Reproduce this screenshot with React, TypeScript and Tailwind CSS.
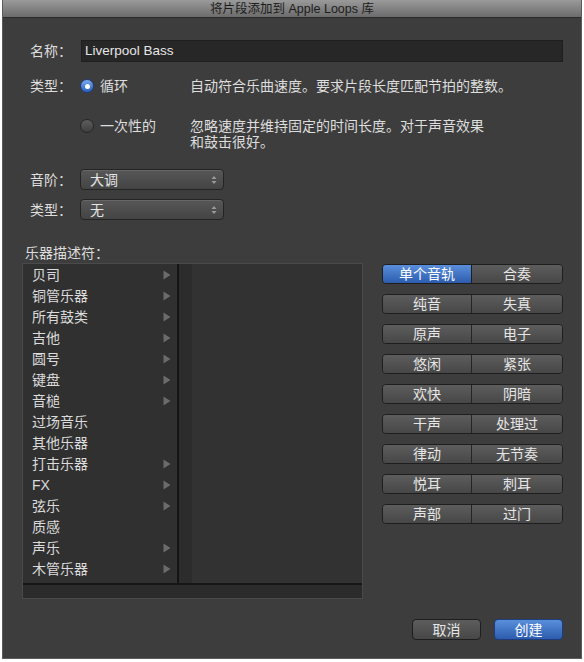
import React from 'react';

const instruments = [
  { name: '贝司', more: true },
  { name: '铜管乐器', more: true },
  { name: '所有鼓类', more: true },
  { name: '吉他', more: true },
  { name: '圆号', more: true },
  { name: '键盘', more: true },
  { name: '音槌', more: true },
  { name: '过场音乐', more: false },
  { name: '其他乐器', more: false },
  { name: '打击乐器', more: true },
  { name: 'FX', more: true },
  { name: '弦乐', more: true },
  { name: '质感', more: false },
  { name: '声乐', more: true },
  { name: '木管乐器', more: true },
];

const descriptors = [
  ['单个音轨', '合奏'],
  ['纯音', '失真'],
  ['原声', '电子'],
  ['悠闲', '紧张'],
  ['欢快', '阴暗'],
  ['干声', '处理过'],
  ['律动', '无节奏'],
  ['悦耳', '刺耳'],
  ['声部', '过门'],
];

const Radio: React.FC<{ on?: boolean }> = ({ on }) =>
  on ? (
    <span className="w-[14px] h-[14px] rounded-full border border-[#1d3d7c] bg-gradient-to-b from-[#7aa9ef] to-[#2b5fbf] flex items-center justify-center shrink-0">
      <span className="w-[5px] h-[5px] rounded-full bg-white" />
    </span>
  ) : (
    <span className="w-[14px] h-[14px] rounded-full border border-[#262626] bg-gradient-to-b from-[#5e5e5e] to-[#3f3f3f] shrink-0" />
  );

const Select: React.FC<{ value: string }> = ({ value }) => (
  <div className="w-[144px] h-[21px] rounded-[4px] border border-[#242424] bg-gradient-to-b from-[#575757] to-[#444444] flex items-center pl-[9px] pr-[6px] text-[#e4e4e4] shadow-[inset_0_1px_0_#666]">
    <span className="flex-1 leading-[16px]">{value}</span>
    <svg width="6" height="10" viewBox="0 0 6 10">
      <path d="M3 1 L5.5 4 L0.5 4 Z" fill="#9a9a9a" />
      <path d="M3 9 L5.5 6 L0.5 6 Z" fill="#9a9a9a" />
    </svg>
  </div>
);

const Arrow = () => (
  <svg width="8" height="10" viewBox="0 0 8 10">
    <path d="M0.5 0.5 L7.5 5 L0.5 9.5 Z" fill="#6b6b6b" />
  </svg>
);

export default function App() {
  return (
    <div className="w-[584px] h-[662px] bg-white font-['Liberation_Sans','Noto_Sans_CJK_SC',sans-serif] text-[14px]">
      <div className="ml-[2px] w-[580px] h-[659px] bg-[#3d3d3d] border-x border-b border-[#5c5c5c] flex flex-col">
        {/* title bar */}
        <div className="h-[18px] shrink-0 bg-gradient-to-b from-[#9a9a9a] to-[#6c6c6c] border-b border-[#2a2a2a] flex items-center justify-center text-[12.5px] leading-[14px] text-[#1c1c1c]">
          将片段添加到 Apple Loops 库
        </div>

        <div className="flex flex-col pl-[19px] pr-[18px] text-[#dedede]">
          {/* name */}
          <div className="mt-[22px] flex items-center pl-[8px]">
            <span className="w-[51px] leading-[16px]">名称：</span>
            <div className="flex-1 h-[22px] bg-[#272727] border border-[#1f1f1f] flex items-center pl-[3px] text-[#e6e6e6] text-[13.5px] leading-[16px]">
              Liverpool Bass
            </div>
          </div>

          {/* loop type */}
          <div className="mt-[16px] flex items-center pl-[8px] h-[16px]">
            <span className="w-[50px] leading-[16px]">类型：</span>
            <div className="w-[110px] flex items-center gap-[6px]">
              <Radio on />
              <span className="leading-[16px]">循环</span>
            </div>
            <span className="leading-[16px]">自动符合乐曲速度。要求片段长度匹配节拍的整数。</span>
          </div>

          <div className="mt-[24px] flex items-start pl-[58px]">
            <div className="w-[110px] h-[16px] flex items-center gap-[6px]">
              <Radio />
              <span className="leading-[16px]">一次性的</span>
            </div>
            <span className="leading-[16px] w-[310px]">
              忽略速度并维持固定的时间长度。对于声音效果
              <br />
              和鼓击很好。
            </span>
          </div>

          {/* scale / genre */}
          <div className="mt-[19px] flex items-center pl-[8px]">
            <span className="w-[50px] leading-[16px]">音阶：</span>
            <Select value="大调" />
          </div>
          <div className="mt-[9px] flex items-center pl-[8px]">
            <span className="w-[50px] leading-[16px]">类型：</span>
            <Select value="无" />
          </div>

          <div className="mt-[25px] pl-[3px] leading-[16px]">乐器描述符：</div>

          <div className="mt-[2px] flex items-start">
            {/* instrument browser */}
            <div className="w-[341px] h-[336px] border border-[#4a4a4a] bg-[#303030] flex flex-col">
              <div className="flex flex-1">
                <div className="w-[154px] bg-[#303030]">
                  {instruments.map((it) => (
                    <div key={it.name} className="h-[21px] flex items-center pl-[9px] pr-[6px] text-[#dcdcdc]">
                      <span className="flex-1 leading-[16px]">{it.name}</span>
                      {it.more && <Arrow />}
                    </div>
                  ))}
                </div>
                <div className="w-[2px] bg-[#141414]" />
                <div className="w-[13px] bg-[#2c2c2c]" />
                <div className="flex-1 bg-[#323232]" />
              </div>
              <div className="h-[2px] bg-[#161616]" />
              <div className="h-[13px] bg-[#2b2b2b]" />
            </div>

            {/* descriptor toggles */}
            <div className="ml-[19px] mt-[1px] flex-1 flex flex-col gap-[10px]">
              {descriptors.map(([a, b], i) => (
                <div key={a} className="h-[20px] flex rounded-[4px] border border-[#1e1e1e] overflow-hidden text-[#e6e6e6] leading-[16px]">
                  <div
                    className={
                      i === 0
                        ? 'w-[89px] flex items-center justify-center bg-gradient-to-b from-[#5a8fdc] to-[#2d5cae] text-white border-r border-[#1e1e1e]'
                        : 'w-[89px] flex items-center justify-center bg-gradient-to-b from-[#5d5d5d] to-[#474747] border-r border-[#252525]'
                    }
                  >
                    {a}
                  </div>
                  <div className="flex-1 flex items-center justify-center bg-gradient-to-b from-[#5d5d5d] to-[#474747]">
                    {b}
                  </div>
                </div>
              ))}
            </div>
          </div>

          {/* footer buttons */}
          <div className="mt-[20px] flex justify-end gap-[13px]">
            <button className="w-[69px] h-[21px] rounded-[4px] border border-[#1e1e1e] bg-gradient-to-b from-[#5d5d5d] to-[#474747] text-[#e6e6e6] leading-[16px]">
              取消
            </button>
            <button className="w-[69px] h-[21px] rounded-[4px] border border-[#1d3d7c] bg-gradient-to-b from-[#5a8fdc] to-[#2d5cae] text-white leading-[16px]">
              创建
            </button>
          </div>
        </div>
      </div>
    </div>
  );
}
